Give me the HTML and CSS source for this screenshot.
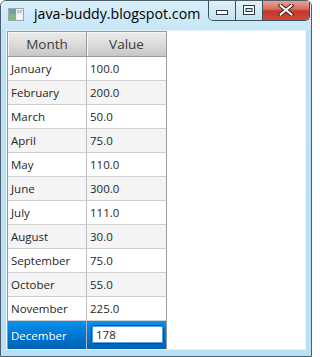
FILE: index.html
```html
<!DOCTYPE html>
<html>
<head>
<meta charset="utf-8">
<link rel="stylesheet" href="styles.css">
</head>
<body>
<div class="window">
  <div class="titlebar">
    <svg class="app-icon" width="16" height="13" viewBox="0 0 16 13">
      <rect x="0.5" y="0.5" width="15" height="12" fill="#e9eef2" stroke="#9aa6b0"/>
      <rect x="1" y="1" width="7" height="11" fill="#6b9fb8"/>
      <rect x="1" y="6" width="7" height="6" fill="#7fb87a"/>
      <rect x="9" y="2" width="5" height="3" fill="#c4ccd3"/>
      <rect x="9" y="7" width="5" height="4" fill="#f7f9fa"/>
    </svg>
    <span class="title">java-buddy.blogspot.com</span>
    <div class="controls">
      <div class="btn btn-min">
        <svg width="12" height="6" viewBox="0 0 12 6"><rect x="0.5" y="0.5" width="11" height="4" fill="#fff" stroke="#2c3a46"/></svg>
      </div>
      <div class="btn btn-max">
        <svg width="12" height="10" viewBox="0 0 12 10"><rect x="0.5" y="0.5" width="11" height="9" fill="#fff" stroke="#2c3a46"/><rect x="3" y="3.5" width="6" height="3" fill="#cfe8f5" stroke="#2c3a46"/></svg>
      </div>
      <div class="btn btn-close">
        <svg width="16" height="12" viewBox="0 0 16 12">
          <path d="M2.5 1.5 L13.5 10.5 M13.5 1.5 L2.5 10.5" stroke="#3a1d1a" stroke-width="4" stroke-linecap="square"/>
          <path d="M2.5 1.5 L13.5 10.5 M13.5 1.5 L2.5 10.5" stroke="#ffffff" stroke-width="2" stroke-linecap="square"/>
        </svg>
      </div>
    </div>
  </div>
  <div class="client">
    <div class="table">
      <div class="row head">
        <div class="hc">Month</div>
        <div class="hc">Value</div>
      </div>
      <div class="row odd"><div class="c">January</div><div class="c">100.0</div></div>
      <div class="row even"><div class="c">February</div><div class="c">200.0</div></div>
      <div class="row odd"><div class="c">March</div><div class="c">50.0</div></div>
      <div class="row even"><div class="c">April</div><div class="c">75.0</div></div>
      <div class="row odd"><div class="c">May</div><div class="c">110.0</div></div>
      <div class="row even"><div class="c">June</div><div class="c">300.0</div></div>
      <div class="row odd"><div class="c">July</div><div class="c">111.0</div></div>
      <div class="row even"><div class="c">August</div><div class="c">30.0</div></div>
      <div class="row odd"><div class="c">September</div><div class="c">75.0</div></div>
      <div class="row even"><div class="c">October</div><div class="c">55.0</div></div>
      <div class="row odd"><div class="c">November</div><div class="c">225.0</div></div>
      <div class="row selected"><div class="c">December</div><div class="c edit"><div class="field">178</div></div></div>
    </div>
  </div>
</div>
</body>
</html>
```

FILE: styles.css
```css
html, body {
  margin: 0;
  padding: 0;
  background: #ffffff;
}

.window {
  width: 312px;
  height: 357px;
  box-sizing: border-box;
  border: 1px solid #4e606d;
  border-radius: 6px 6px 0 0;
  background: linear-gradient(to bottom, #cbe8f7 0px, #bfe3f5 30px, #b9e0f4 100%);
  display: flex;
  flex-direction: column;
  overflow: hidden;
}

.titlebar {
  height: 29px;
  flex: none;
  display: flex;
  align-items: flex-start;
  padding-left: 7px;
  background: linear-gradient(to bottom, #d9eff9 0px, #c6e6f6 29px);
}

.app-icon {
  margin-top: 7px;
  flex: none;
}

.title {
  margin-left: 10px;
  margin-top: 3px;
  font-family: "Open Sans", "Noto Sans", sans-serif;
  font-size: 14.2px;
  line-height: 20px;
  color: #000000;
  white-space: nowrap;
}

.controls {
  margin-left: auto;
  margin-top: -1px;
  margin-right: 1px;
  display: flex;
  height: 21px;
  box-sizing: border-box;
  border: 1px solid #3c4f5c;
  border-top: none;
  border-radius: 0 0 5px 5px;
  overflow: hidden;
}

.btn {
  display: flex;
  align-items: center;
  justify-content: center;
  height: 100%;
}

.btn-min {
  width: 27px;
  border-right: 1px solid #3c4f5c;
  background: linear-gradient(to bottom, #e3f2fa, #c3e2f3);
  align-items: flex-end;
  padding-bottom: 4px;
  box-sizing: border-box;
}

.btn-max {
  width: 26px;
  border-right: 1px solid #3c4f5c;
  background: linear-gradient(to bottom, #e3f2fa, #c3e2f3);
}

.btn-close {
  width: 46px;
  background: linear-gradient(to bottom, #e9a99b 0%, #d7705f 45%, #c7382a 55%, #cf4a38 100%);
}

.client {
  flex: none;
  height: 320px;
  margin: 0 5px 6px 5px;
  box-sizing: border-box;
  border: 1px solid #e8f3f9;
  background: #ffffff;
  overflow: hidden;
}

.table {
  width: 160px;
  height: 320px;
  box-sizing: border-box;
  border: 1px solid #9b9b9b;
  border-bottom: none;
  font-family: "Open Sans", "Noto Sans", sans-serif;
  font-size: 11.5px;
  color: #262626;
}

.row {
  display: grid;
  grid-template-columns: 79px 79px;
  height: 24px;
  box-sizing: border-box;
  border-bottom: 1px solid #cfcfcf;
}

.head {
  height: 25px;
  border-bottom: 1px solid #9b9b9b;
}

.hc {
  display: flex;
  align-items: center;
  justify-content: center;
  font-size: 13.5px;
  color: #3a3a3a;
  background: linear-gradient(to bottom, #ececec 0%, #dcdcdc 50%, #c6c6c6 100%);
  box-shadow: inset 1px 1px 0 #f6f6f6;
}

.hc:first-child {
  border-right: 1px solid #9b9b9b;
}

.c {
  display: flex;
  align-items: center;
  padding-left: 3px;
}

.c:first-child {
  border-right: 1px solid #c0c0c0;
}

.even {
  background: #f4f4f4;
}

.odd {
  background: #ffffff;
}

.selected {
  height: 28px;
  border-bottom: none;
  background: linear-gradient(to bottom, #0a92ef 0%, #0077d2 50%, #0062b4 100%);
  color: #ffffff;
}

.selected .c:first-child {
  border-right-color: #a9b8c4;
}

.edit {
  padding-left: 4px;
  padding-right: 2px;
  align-items: flex-start;
  padding-top: 4px;
}

.field {
  width: 100%;
  height: 19px;
  box-sizing: border-box;
  border: 1px solid #0b4f8f;
  border-radius: 3px;
  background: #ffffff;
  box-shadow: inset 0 0 0 1px #5aa8e6;
  color: #1f1f1f;
  padding-left: 4px;
  line-height: 17px;
}
```
